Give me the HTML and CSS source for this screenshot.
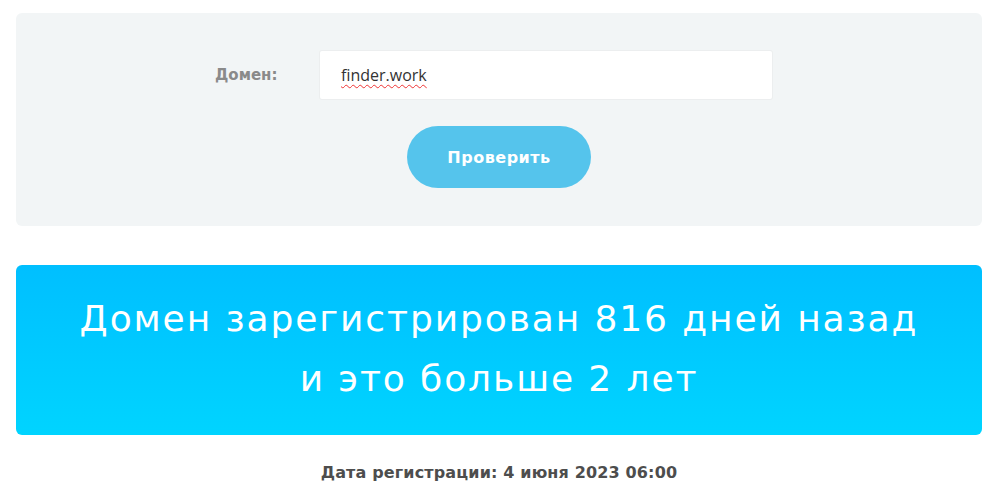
FILE: index.html
```html
<!DOCTYPE html>
<html lang="ru">
<head>
<meta charset="utf-8">
<link rel="stylesheet" href="styles.css">
</head>
<body>
<div class="page">
  <form class="panel">
    <div class="row">
      <label class="label">Домен:</label>
      <div class="input"><span class="typo">finder.work</span></div>
    </div>
    <button type="button" class="btn">Проверить</button>
  </form>
  <div class="result">
    <div class="result-text">Домен зарегистрирован 816 дней назад<br>и это больше 2 лет</div>
  </div>
  <div class="date">Дата регистрации: 4 июня 2023 06:00</div>
</div>
</body>
</html>
```
FILE: styles.css
```css
html, body { margin: 0; padding: 0; background: #fff; }
body { font-family: "DejaVu Sans", "Open Sans", sans-serif; }
.page { padding: 13px 15px 0 16px; }
.panel {
  background: #f2f5f6;
  border-radius: 6px;
  padding: 38px 0 38px;
  display: flex;
  flex-direction: column;
  align-items: center;
}
.row {
  display: flex;
  align-items: center;
  align-self: stretch;
  padding-left: 199px;
}
.label {
  width: 105px;
  font-size: 15px;
  font-weight: 700;
  color: #8a8a8a;
}
.input {
  width: 452px;
  height: 48px;
  box-sizing: border-box;
  background: #fff;
  border-radius: 2px;
  box-shadow: 0 0 0 1px #eceeef;
  padding: 0 21px;
  display: flex;
  align-items: center;
  font-family: "Open Sans", sans-serif;
  font-size: 16px;
  color: #333;
}
.typo { text-decoration: underline wavy #e33; text-decoration-thickness: 1px; text-underline-offset: 3px; }
.btn {
  margin-top: 27px;
  width: 184px;
  height: 62px;
  border: 0;
  border-radius: 31px;
  background: #55c4ec;
  color: #fff;
  font-family: inherit;
  font-size: 16px;
  font-weight: 700;
  letter-spacing: 0.5px;
}
.result {
  margin-top: 39px;
  height: 170px;
  border-radius: 6px;
  background: linear-gradient(180deg, #00bfff 0%, #00d4ff 100%);
  display: flex;
  align-items: center;
  justify-content: center;
}
.result-text {
  color: #fff;
  font-size: 36px;
  line-height: 60px;
  text-align: center;
  font-weight: 400;
  letter-spacing: 1.9px;
  padding-bottom: 3px;
}
.date {
  margin-top: 28px;
  text-align: center;
  font-size: 16px;
  font-weight: 700;
  color: #4d4d4d;
  letter-spacing: 0.15px;
}
```
